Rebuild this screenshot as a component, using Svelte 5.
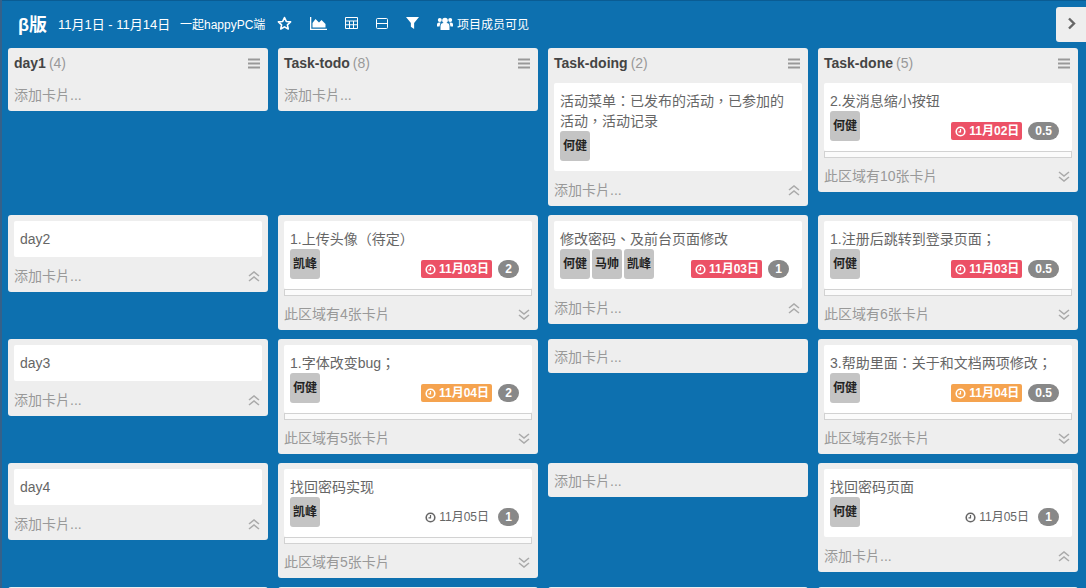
<script>
    const rows = [
        [
            { title: "day1", count: 4, add: true, cards: [] },
            { title: "Task-todo", count: 8, add: true, cards: [] },
            { title: "Task-doing", count: 2, add: true, up: true, cards: [
                { text: "活动菜单：已发布的活动，已参加的活动，活动记录", people: ["何健"] }
            ] },
            { title: "Task-done", count: 5, more: 10, cards: [
                { text: "2.发消息缩小按钮", people: ["何健"], date: "11月02日", color: "red", score: "0.5" }
            ] }
        ],
        [
            { add: true, up: true, cards: [{ text: "day2" }] },
            { more: 4, cards: [{ text: "1.上传头像（待定）", people: ["凯峰"], date: "11月03日", color: "red", score: "2" }] },
            { add: true, up: true, cards: [{ text: "修改密码、及前台页面修改", people: ["何健", "马帅", "凯峰"], date: "11月03日", color: "red", score: "1" }] },
            { more: 6, cards: [{ text: "1.注册后跳转到登录页面；", people: ["何健"], date: "11月03日", color: "red", score: "0.5" }] }
        ],
        [
            { add: true, up: true, cards: [{ text: "day3" }] },
            { more: 5, cards: [{ text: "1.字体改变bug；", people: ["何健"], date: "11月04日", color: "orange", score: "2" }] },
            { add: true, cards: [] },
            { more: 2, cards: [{ text: "3.帮助里面：关于和文档两项修改；", people: ["何健"], date: "11月04日", color: "orange", score: "0.5" }] }
        ],
        [
            { add: true, up: true, cards: [{ text: "day4" }] },
            { more: 5, cards: [{ text: "找回密码实现", people: ["凯峰"], date: "11月05日", score: "1" }] },
            { add: true, cards: [] },
            { add: true, up: true, cards: [{ text: "找回密码页面", people: ["何健"], date: "11月05日", score: "1" }] }
        ]
    ];
    const lists = rows.flat();
</script>

<main class="board">
    <header class="topbar">
        <span class="brand">β版</span>
        <span class="dates">11月1日 - 11月14日</span>
        <span class="project">一起happyPC端</span>
        <div class="tools">
            <svg width="15" height="15" viewBox="0 0 16 16"><path d="M8 1.6l1.9 4.200 4.600.5-3.400 3.100.9 4.500L8 11.600l-4 2.300.9-4.500L1.500 6.300l4.600-.5z" fill="none" stroke="#fff" stroke-width="1.700" stroke-linejoin="round"/></svg>
            <svg width="17" height="13" viewBox="0 0 17 13"><path d="M0 0h1.300v11.700H17V13H0z M2.500 10.500V6l3-4 3.500 3.500L11.500 3 15.500 7v3.500z" fill="#fff"/></svg>
            <svg width="13" height="12" viewBox="0 0 13 12"><path d="M.5.500h12v11H.5z M.5 4h12 M.5 7.750h12 M4.500 4v7.500 M8.500 4v7.500" fill="none" stroke="#fff"/></svg>
            <svg width="12" height="11" viewBox="0 0 12 11"><path d="M1.500.500h9a1 1 0 0 1 1 1v8a1 1 0 0 1-1 1h-9a1 1 0 0 1-1-1v-8a1 1 0 0 1 1-1z M.5 5.500h11" fill="none" stroke="#fff"/></svg>
            <svg width="13" height="12" viewBox="0 0 12 11"><path d="M0 0h12L7.500 5.500V11l-3-2V5.500z" fill="#fff"/></svg>
            <span class="visibility">
                <svg width="16" height="13" viewBox="0 0 16 13"><circle cx="8" cy="3.500" r="2.800" fill="#fff"/><circle cx="2.800" cy="3" r="2" fill="#fff"/><circle cx="13.200" cy="3" r="2" fill="#fff"/><path d="M3.500 13V9a3 3 0 0 1 3-3h3a3 3 0 0 1 3 3v4z M0 9.500V7.500a2 2 0 0 1 2-2h1.500L2.500 9.500z M16 9.500V7.500a2 2 0 0 0-2-2h-1.500l1 4z" fill="#fff"/></svg>
                项目成员可见
            </span>
        </div>
    </header>

    <button class="next" aria-label="next">
        <svg width="9" height="13" viewBox="0 0 9 13"><path d="M2 1.500l5 5-5 5" fill="none" stroke="#666" stroke-width="2.400"/></svg>
    </button>

    <div class="grid">
        {#each lists as list}
            <section class="list">
                {#if list.title}
                    <div class="list-head">
                        <span class="name">{list.title}</span>
                        <span class="count">({list.count})</span>
                        <svg class="menu" width="12" height="11" viewBox="0 0 12 11"><path d="M0 1.500h12M0 5.500h12M0 9.500h12" stroke="#999" stroke-width="2"/></svg>
                    </div>
                {/if}
                {#each list.cards as card}
                    <div class="card">
                        <div class="card-text">{card.text}</div>
                        {#if card.people}
                            <div class="card-meta">
                                {#each card.people as person}
                                    <span class="person">{person}</span>
                                {/each}
                                {#if card.date}
                                    <span class="info">
                                        <span class="date {card.color ?? ''}">
                                            <svg width="11" height="11" viewBox="0 0 11 11"><circle cx="5.500" cy="5.500" r="4.300" fill="none" stroke="currentColor" stroke-width="1.600"/><path d="M5.500 3v2.800H3.500" fill="none" stroke="currentColor" stroke-width="1.200"/></svg>
                                            {card.date}
                                        </span>
                                        <span class="score">{card.score}</span>
                                    </span>
                                {/if}
                            </div>
                        {/if}
                    </div>
                {/each}
                {#if list.more}
                    <div class="stack"></div>
                {/if}
                <div class="list-foot">
                    <span>{list.more ? `此区域有${list.more}张卡片` : "添加卡片..."}</span>
                    {#if list.more || list.up}
                        <svg class="fold" width="12" height="11" viewBox="0 0 12 11">
                            <path d={list.more ? "M1 1l5 4 5-4M1 6l5 4 5-4" : "M1 5l5-4 5 4M1 10l5-4 5 4"} fill="none" stroke="#aaa" stroke-width="1.600"/>
                        </svg>
                    {/if}
                </div>
            </section>
        {/each}
        <!-- next row of the board, only its top edge is still on screen -->
        {#each [1, 2, 3, 4] as n}
            <section class="list peek"></section>
        {/each}
    </div>
</main>

<style>
    :global(body) {
        background: #0d70af;
        font-family: "Liberation Sans", "Noto Sans CJK TC", sans-serif;
        overflow: hidden;
    }

    .board {
        height: 588px;
        overflow: hidden;
        position: relative;
        background: #0d70af;
        box-shadow: inset 2px 0 #35618a, inset 0 1px #0a5c93;
    }

    .topbar {
        display: flex;
        align-items: center;
        height: 48px;
        padding: 0 0 2px 18px;
        color: #fff;
        box-sizing: border-box;
    }

    .brand {
        font-size: 18px;
        font-weight: bold;
        width: 40px;
    }

    .dates {
        font-size: 13px;
        width: 122px;
    }

    .project {
        font-size: 12px;
        width: 97px;
    }

    .tools {
        display: flex;
        align-items: center;
        gap: 18px;
    }

    .visibility {
        display: flex;
        align-items: center;
        gap: 4px;
        font-size: 12px;
    }

    .next {
        position: absolute;
        top: 7px;
        right: 0;
        width: 30px;
        height: 35px;
        border: 0;
        border-radius: 3px 0 0 3px;
        background: #eee;
        padding: 0;
    }

    .grid {
        display: grid;
        grid-template-columns: repeat(4, 260px);
        grid-template-rows: 158px 115px 115px 115px 60px;
        column-gap: 10px;
        row-gap: 9px;
        padding-left: 8px;
        align-items: start;
    }

    .list {
        background: #eee;
        border-radius: 3px;
        padding: 6px 6px 0;
    }

    .peek {
        height: 60px;
        padding: 0;
    }

    .list-head {
        display: flex;
        align-items: center;
        height: 18px;
        margin-bottom: 11px;
        font-size: 14px;
    }

    .name {
        font-weight: bold;
        color: #444;
        margin-right: 3px;
    }

    .count {
        color: #999;
    }

    .menu {
        margin-left: auto;
        margin-right: 2px;
    }

    .card {
        background: #fff;
        border-radius: 2px;
        padding: 8px 6px;
        font-size: 14px;
        line-height: 20px;
        color: #666;
    }

    .card-meta {
        display: flex;
        gap: 2px;
        margin-bottom: 2px;
    }

    .person {
        width: 30px;
        height: 30px;
        border-radius: 3px;
        background: #c4c4c4;
        color: #222;
        font-size: 12px;
        font-weight: bold;
        line-height: 30px;
        text-align: center;
    }

    .info {
        margin-left: auto;
        display: flex;
        align-items: center;
        gap: 6px;
        padding: 10px 7px 0 0;
    }

    .date {
        display: flex;
        align-items: center;
        gap: 3px;
        height: 18px;
        padding: 0 3px 0 4px;
        border-radius: 2px;
        font-size: 12px;
        color: #666;
    }

    .date.red {
        background: #ec5166;
        color: #fff;
        font-weight: bold;
    }

    .date.orange {
        background: #f5a34f;
        color: #fff;
        font-weight: bold;
    }

    .score {
        min-width: 7px;
        height: 18px;
        padding: 0 7px;
        border-radius: 9px;
        background: #888;
        color: #fff;
        font-size: 12px;
        font-weight: bold;
        line-height: 18px;
        text-align: center;
    }

    .stack {
        height: 5px;
        background: #fbfbfb;
        border: 1px solid #d2d2d2;
    }

    .list-foot {
        display: flex;
        align-items: center;
        justify-content: space-between;
        height: 22px;
        padding-bottom: 6px;
        font-size: 14px;
        color: #999;
    }

    .list-foot .fold {
        margin-bottom: -3px;
    }

    .card + .list-foot {
        margin-top: 7px;
    }

    .stack + .list-foot {
        margin-top: 6px;
    }

    .fold {
        margin-right: 2px;
    }
</style>
